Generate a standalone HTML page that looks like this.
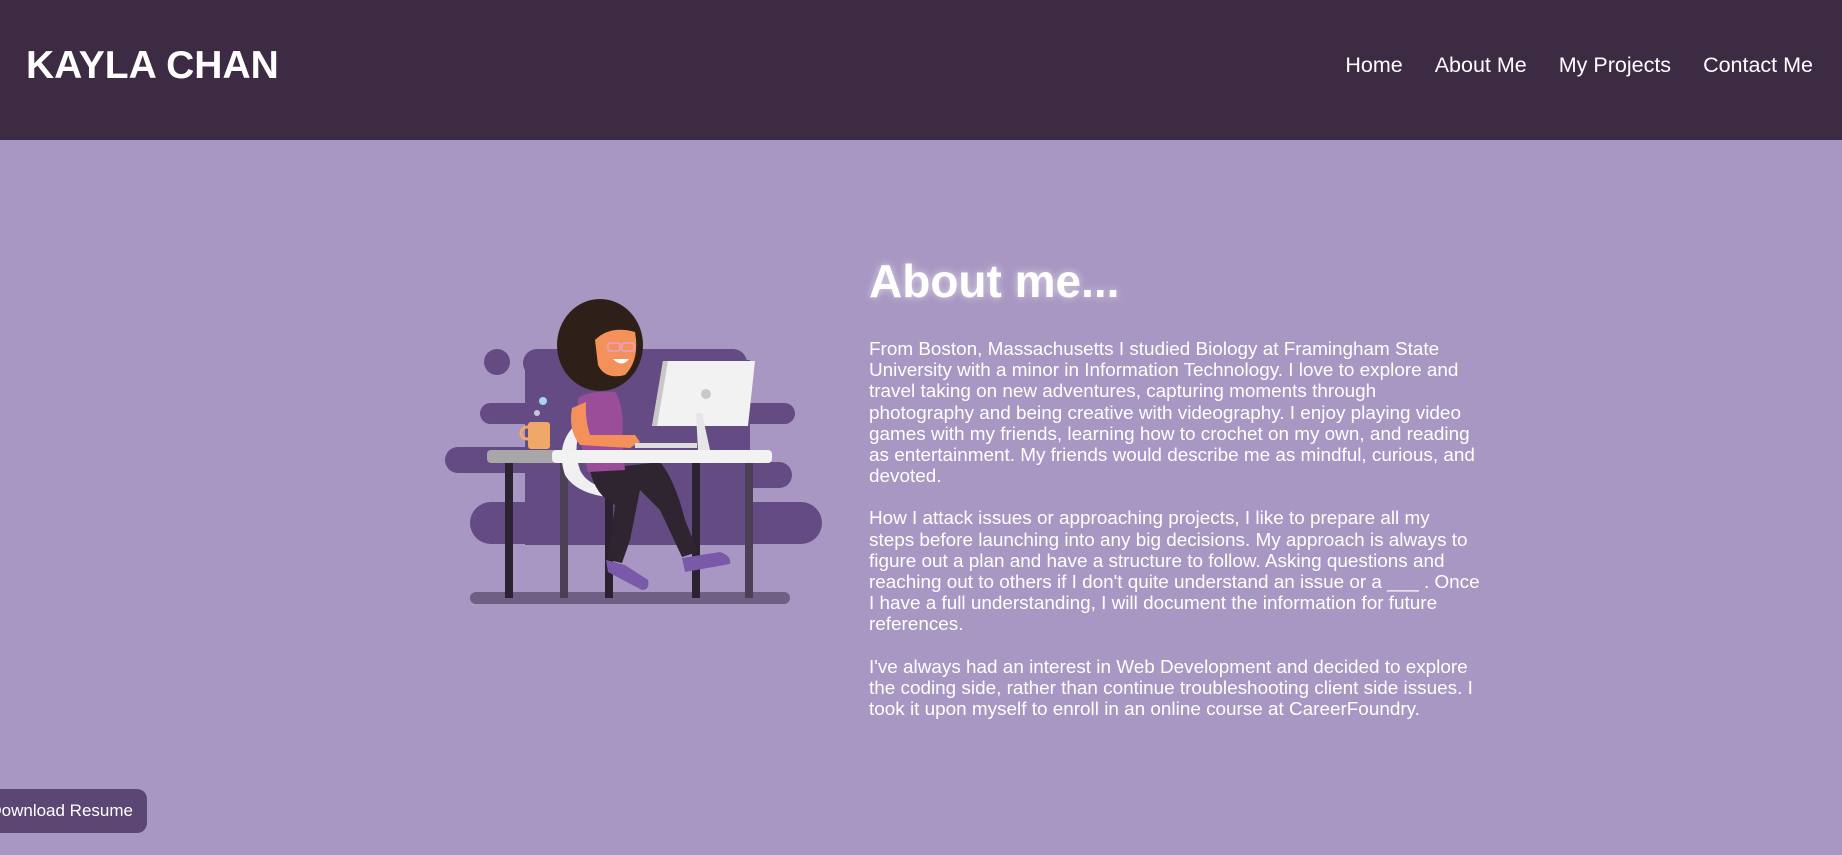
<!DOCTYPE html>
<html><head><meta charset="utf-8">
<style>
html,body{margin:0;padding:0;}
body{width:1842px;height:855px;overflow:hidden;background:#a897c2;font-family:"Liberation Sans",Arial,sans-serif;position:relative;}
header{position:absolute;left:0;top:0;width:1842px;height:140px;background:#3d2a43;}
.logo{position:absolute;left:26px;top:44px;color:#fff;font-weight:bold;font-size:39px;}
nav{position:absolute;right:29px;top:53px;color:#fff;font-size:21.5px;}
nav span{margin-left:32px;}
h1{position:absolute;left:869px;top:254px;margin:0;color:#fff;font-size:46px;font-weight:bold;text-shadow:0 0 8px rgba(255,255,255,0.6);}
.txt{position:absolute;left:869px;top:339px;width:680px;color:#fff;font-size:18.9px;line-height:21.2px;}
.txt p{margin:0 0 21px 0;white-space:nowrap;}
.btn{position:absolute;left:-12px;top:789px;width:159px;height:44px;background:#5c4674;border-radius:10px;color:#fff;font-size:17px;line-height:44px;text-align:right;box-sizing:border-box;padding-right:14px;}
svg{position:absolute;left:430px;top:280px;}
</style></head><body>
<header><div class="logo">KAYLA CHAN</div>
<nav><span>Home</span><span>About Me</span><span>My Projects</span><span>Contact Me</span></nav></header>

<svg width="420" height="330" viewBox="0 0 420 330">
<g fill="#644b84">
<circle cx="67" cy="82" r="13"/>
<rect x="93" y="69" width="224" height="28" rx="14"/>
<rect x="95" y="80" width="225" height="185"/>
<rect x="50" y="123" width="315" height="21" rx="10.5"/>
<rect x="15" y="167" width="285" height="26" rx="13"/>
<rect x="290" y="182" width="72" height="26" rx="13"/>
<rect x="40" y="222" width="352" height="42" rx="21"/>
</g>
<rect x="40" y="312" width="320" height="12" rx="6" fill="#6f5f85"/>
<rect x="75" y="183" width="8" height="135" fill="#2a2230"/>
<rect x="130" y="183" width="8" height="135" fill="#4a3f55"/>
<rect x="175" y="215" width="8" height="103" fill="#2a2230"/>
<rect x="262" y="183" width="8" height="135" fill="#2a2230"/>
<rect x="315" y="183" width="8" height="135" fill="#4a3f55"/>
<path d="M145 145 Q125 165 135 195 Q150 220 205 218 L205 210 Q160 212 150 190 Q143 170 150 150Z" fill="#f0f0f0"/>
<path d="M160 190 L230 182 Q245 200 255 240 L268 272 L252 277 L230 230 L210 210 L200 260 L192 283 L178 280 L185 225 Q165 215 160 190Z" fill="#2f2530"/>
<path d="M176 280 L195 285 L218 300 Q220 310 212 310 L178 292Z" fill="#7a5aa8"/>
<path d="M252 278 L290 272 Q302 276 300 284 L255 292Z" fill="#7a5aa8"/>
<path d="M148 118 Q160 110 185 112 Q195 125 192 160 L195 190 L158 192 Q148 160 148 118Z" fill="#9a4e9a"/>
<path d="M142 128 Q138 150 150 165 L200 168 L210 162 L205 155 L160 155 Q155 140 156 122Z" fill="#f4915a"/>
<ellipse cx="170" cy="65" rx="43" ry="46" fill="#2e2018"/>
<path d="M165 60 Q180 45 205 52 Q210 80 195 95 Q175 100 168 85Z" fill="#f4915a"/>
<rect x="178" y="63" width="12" height="8" rx="2" fill="none" stroke="#e8a0d0" stroke-width="1.5"/>
<rect x="192" y="63" width="12" height="8" rx="2" fill="none" stroke="#e8a0d0" stroke-width="1.5"/>
<path d="M183 79 Q192 88 199 79Z" fill="#fff"/>
<path d="M233 81 L325 81 L318 146 L222 146Z" fill="#f2f2f2"/>
<path d="M233 81 L238 81 L227 146 L222 146Z" fill="#c8c8c8"/>
<circle cx="276" cy="114" r="5" fill="#c8c8c8"/>
<path d="M266 133 L272 133 L280 170 L268 170Z" fill="#e6e6e6"/>
<rect x="205" y="163" width="62" height="5" fill="#ddd"/>
<rect x="57" y="170" width="70" height="13" rx="4" fill="#a7a7a9"/>
<rect x="122" y="170" width="220" height="13" rx="4" fill="#f2f2f2"/>
<rect x="98" y="142" width="22" height="27" rx="3" fill="#f0a868"/>
<circle cx="97" cy="153" r="6" fill="none" stroke="#f0a868" stroke-width="3"/>
<circle cx="107" cy="133" r="3" fill="#c9c3e0"/>
<circle cx="113" cy="121" r="4" fill="#a8d4ec"/>
</svg>

<h1>About me...</h1>
<div class="txt">
<p>From Boston, Massachusetts I studied Biology at Framingham State<br>University with a minor in Information Technology. I love to explore and<br>travel taking on new adventures, capturing moments through<br>photography and being creative with videography. I enjoy playing video<br>games with my friends, learning how to crochet on my own, and reading<br>as entertainment. My friends would describe me as mindful, curious, and<br>devoted.</p>
<p>How I attack issues or approaching projects, I like to prepare all my<br>steps before launching into any big decisions. My approach is always to<br>figure out a plan and have a structure to follow. Asking questions and<br>reaching out to others if I don't quite understand an issue or a ___ . Once<br>I have a full understanding, I will document the information for future<br>references.</p>
<p>I've always had an interest in Web Development and decided to explore<br>the coding side, rather than continue troubleshooting client side issues. I<br>took it upon myself to enroll in an online course at CareerFoundry.</p>
</div>
<div class="btn">Download Resume</div>
</body></html>
